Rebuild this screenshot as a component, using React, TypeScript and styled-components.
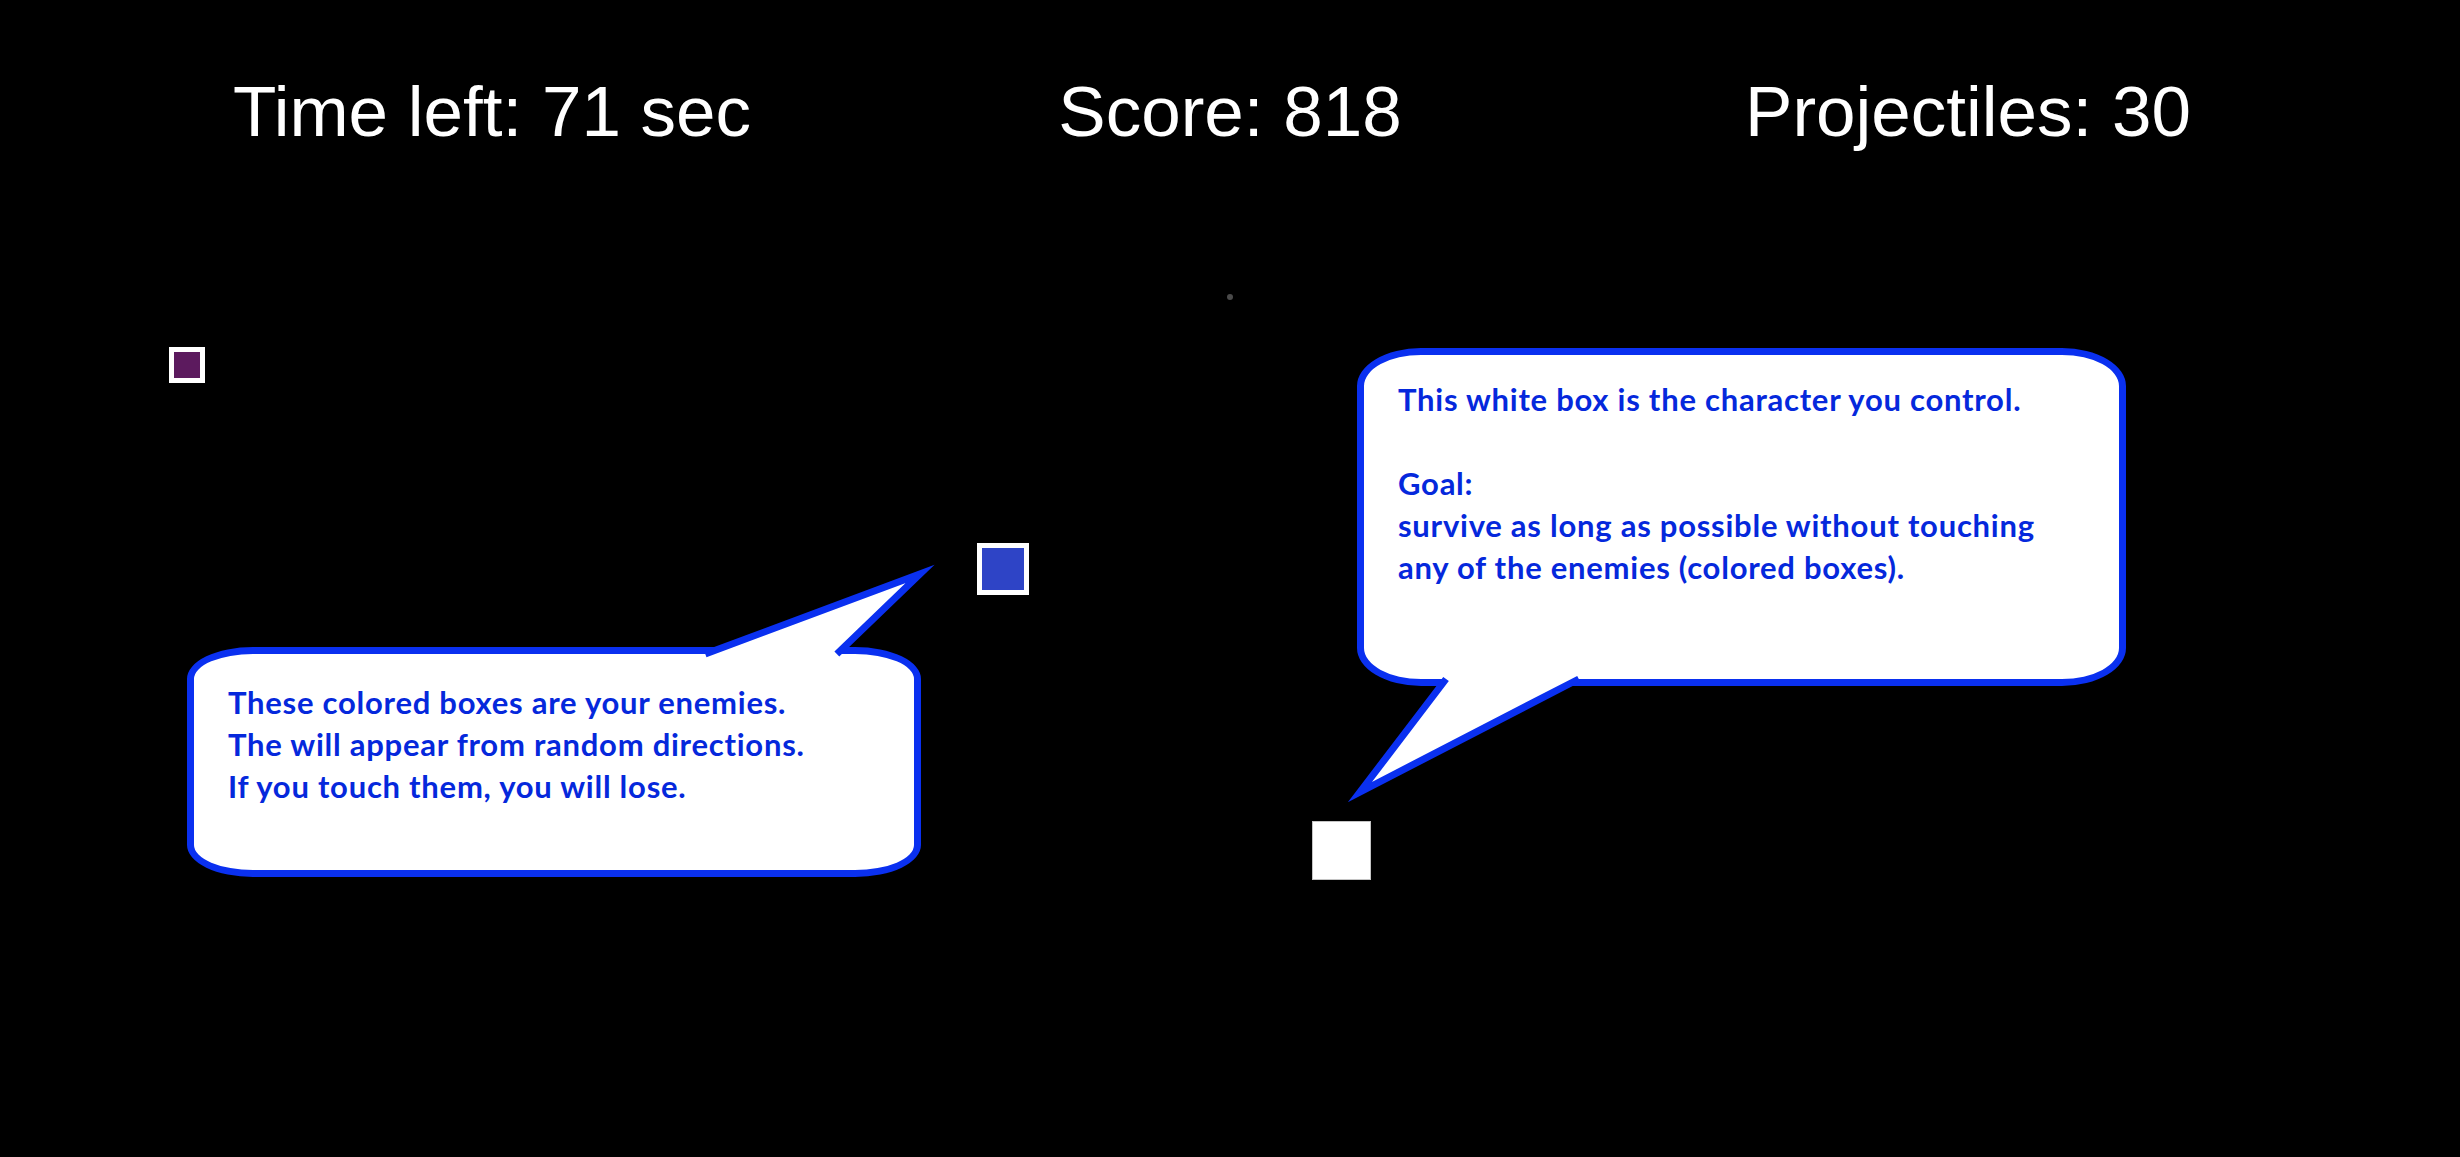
import React from 'react'
import styled, { createGlobalStyle } from 'styled-components'

const GlobalStyle = createGlobalStyle`
  html, body {
    margin: 0;
    padding: 0;
    background: #000;
  }
  * {
    box-sizing: border-box;
  }
`

const Stage = styled.div`
  position: relative;
  width: 100%;
  height: 100vh;
  overflow: hidden;
  background: #000;
  font-family: 'Liberation Sans', Arial, sans-serif;
`

const Hud = styled.div`
  display: grid;
  grid-template-columns: repeat(3, 1fr);
  width: 90%;
  margin: 0 auto;
  padding-top: 71px;
`

const HudItem = styled.div`
  color: #fff;
  font-size: 71px;
  text-align: center;
  white-space: nowrap;
`

type BoxProps = {
  x: number
  y: number
  size: number
  fill: string
}

// things living on the playfield are placed by their game coordinates
const Enemy = styled.div<BoxProps>`
  position: absolute;
  left: ${({ x }) => x}px;
  top: ${({ y }) => y}px;
  width: ${({ size }) => size}px;
  height: ${({ size }) => size}px;
  border: 5px solid #fff;
  background: ${({ fill }) => fill};
`

const Player = styled.div`
  position: absolute;
  left: 1312px;
  top: 821px;
  width: 59px;
  height: 59px;
  background: #fff;
  border: 1px solid #c4c4c4;
`

const Projectile = styled.div`
  position: absolute;
  left: 1227px;
  top: 294px;
  width: 6px;
  height: 6px;
  border-radius: 50%;
  background: #4a4a4a;
`

type BubbleProps = {
  x: number
  y: number
  w: number
  h: number
  rx: number
  ry: number
}

const Bubble = styled.div<BubbleProps>`
  position: absolute;
  left: ${({ x }) => x}px;
  top: ${({ y }) => y}px;
  width: ${({ w }) => w}px;
  height: ${({ h }) => h}px;
  background: #fff;
  border: 7px solid #0a30f0;
  border-radius: ${({ rx, ry }) => `${rx}px / ${ry}px`};
`

const Tail = styled.svg`
  position: absolute;
  left: -7px;
  top: -7px;
  overflow: visible;
  pointer-events: none;
`

type NoteProps = {
  padTop: number
  padLeft: number
}

const Note = styled.div<NoteProps>`
  position: relative;
  padding: ${({ padTop, padLeft }) => `${padTop}px 0 0 ${padLeft}px`};
  color: #0528dc;
  font-family: Lato, 'Open Sans', sans-serif;
  font-weight: 700;
  font-size: 31px;
  letter-spacing: 0.75px;
  line-height: 42px;
  white-space: pre-line;
`

type Pt = [number, number]

// point on the line tip->base extended until it reaches y
const along = (tip: Pt, base: Pt, y: number): Pt => {
  const t = (y - tip[1]) / (base[1] - tip[1])
  return [tip[0] + (base[0] - tip[0]) * t, y]
}

const TailShape = ({
  w,
  h,
  tip,
  left,
  right,
  edge,
  inner
}: {
  w: number
  h: number
  tip: Pt
  left: Pt
  right: Pt
  edge: number
  inner: number
}) => {
  const a = along(tip, left, inner)
  const b = along(tip, right, inner)
  const s1 = along(tip, left, edge)
  const s2 = along(tip, right, edge)
  return (
    <Tail width={w} height={h}>
      <path d={`M${a[0]} ${a[1]} L${tip[0]} ${tip[1]} L${b[0]} ${b[1]} Z`} fill="#fff" />
      <path
        d={`M${s1[0]} ${s1[1]} L${tip[0]} ${tip[1]} L${s2[0]} ${s2[1]}`}
        fill="none"
        stroke="#0a30f0"
        strokeWidth={7}
        strokeMiterlimit={10}
        strokeLinejoin="miter"
      />
    </Tail>
  )
}

export default function App() {
  return (
    <>
      <GlobalStyle />
      <Stage>
        <Hud>
          <HudItem>Time left: 71 sec</HudItem>
          <HudItem>Score: 818</HudItem>
          <HudItem>Projectiles: 30</HudItem>
        </Hud>

        <Projectile />
        <Enemy x={169} y={347} size={36} fill="#5c1a5e" />
        <Enemy x={977} y={543} size={52} fill="#2e44c6" />
        <Player />

        <Bubble x={187} y={647} w={734} h={230} rx={66} ry={32}>
          <TailShape
            w={734}
            h={230}
            tip={[733, -73]}
            left={[529, 3]}
            right={[654, 3]}
            edge={7}
            inner={14}
          />
          <Note padTop={27} padLeft={34}>
            {'These colored boxes are your enemies.\nThe will appear from random directions.\nIf you touch them, you will lose.'}
          </Note>
        </Bubble>

        <Bubble x={1357} y={348} w={769} h={338} rx={64} ry={38}>
          <TailShape
            w={769}
            h={338}
            tip={[3, 444]}
            left={[86, 335]}
            right={[216, 334]}
            edge={331}
            inner={322}
          />
          <Note padTop={23} padLeft={34}>
            {'This white box is the character you control.\n\nGoal:\nsurvive as long as possible without touching\nany of the enemies (colored boxes).'}
          </Note>
        </Bubble>
      </Stage>
    </>
  )
}
